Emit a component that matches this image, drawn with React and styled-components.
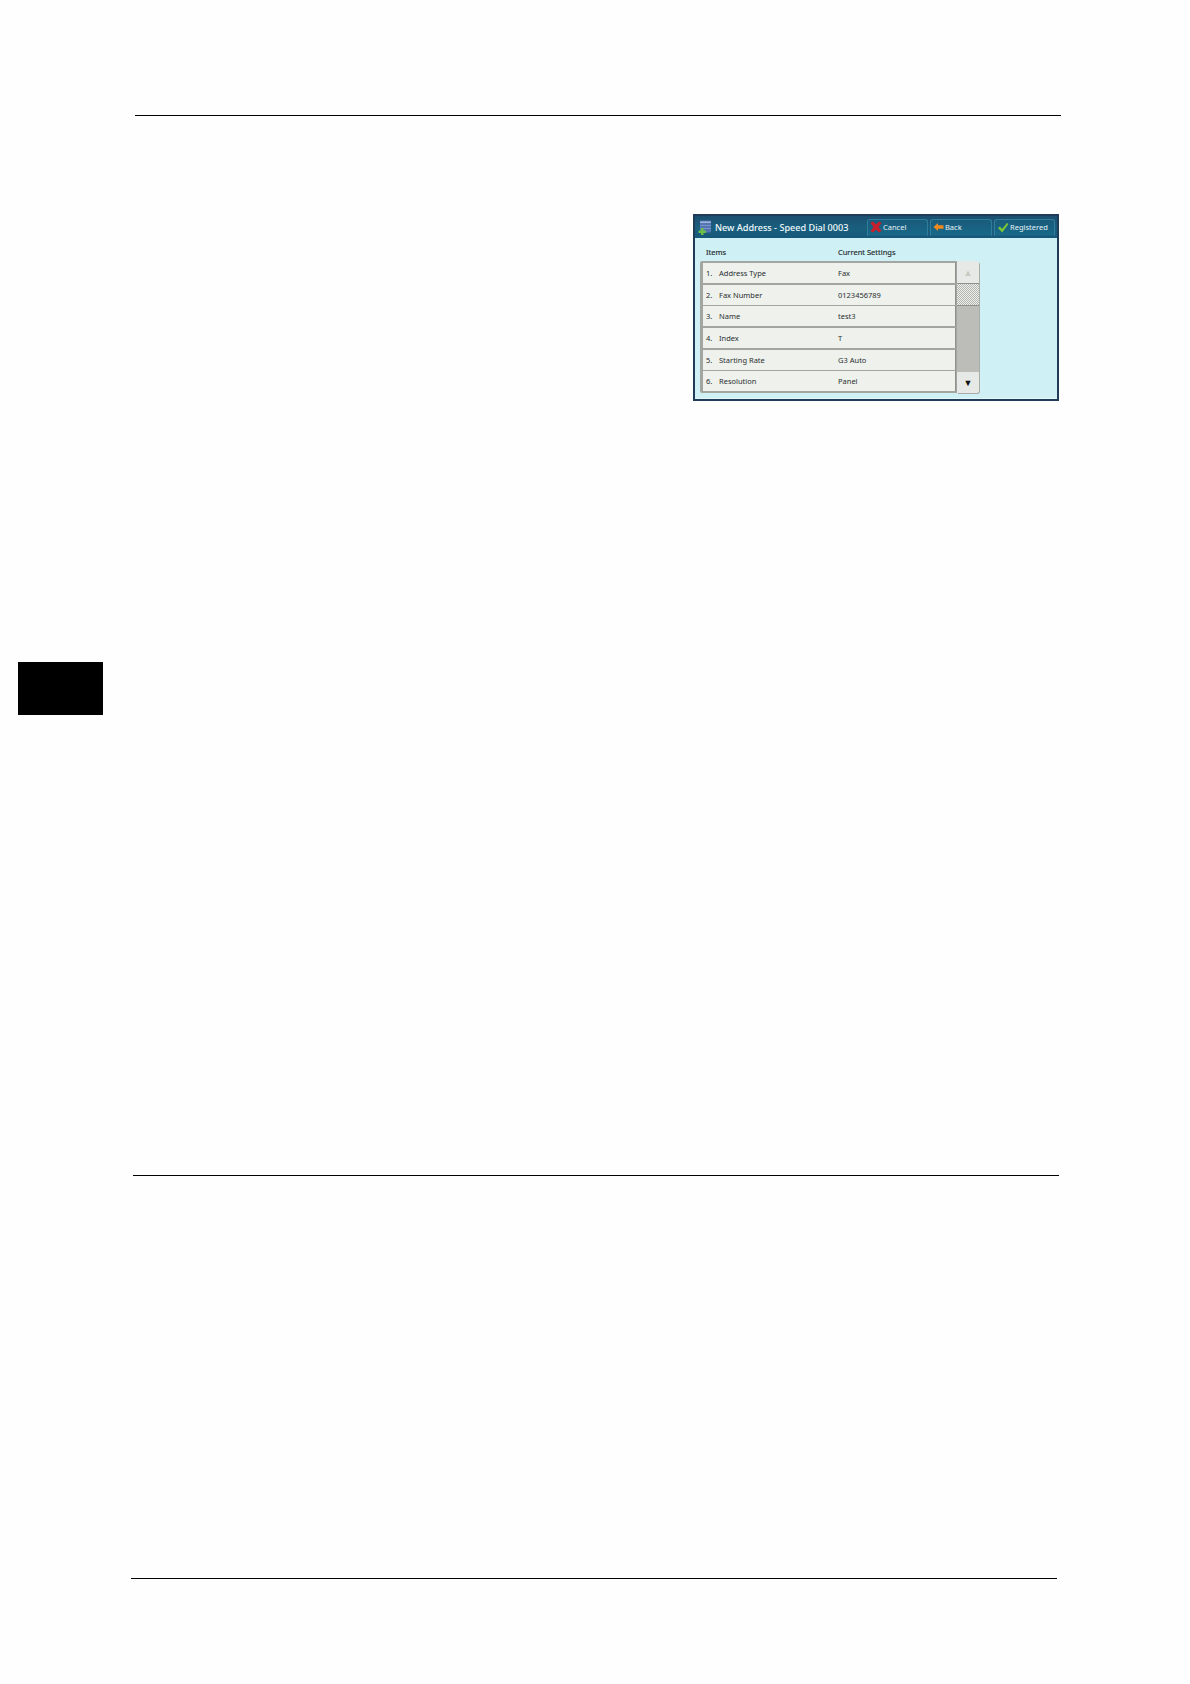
import React from "react";
import styled, { createGlobalStyle } from "styled-components";

const Global = createGlobalStyle`
  html, body { margin: 0; padding: 0; background: #fefefe; }
  * { box-sizing: border-box; }
`;

const Page = styled.div`
  width: 1190px;
  height: 1684px;
  overflow: hidden;
  display: flex;
  flex-direction: column;
  align-items: flex-start;
  font-family: "Noto Sans", "Liberation Sans", sans-serif;
`;

const Rule = styled.div`
  height: 1px;
  background: #000;
  width: ${(p) => p.$width}px;
  margin-left: ${(p) => p.$left}px;
  margin-top: ${(p) => p.$top}px;
`;

const ChapterTab = styled.div`
  width: 85px;
  height: 53px;
  margin-left: 18px;
  margin-top: 261px;
  background: #000;
`;

const Panel = styled.section`
  width: 366px;
  height: 187px;
  margin-left: 693px;
  margin-top: 98px;
  border: 2px solid #1f3d5a;
  display: flex;
  flex-direction: column;
  background: #cff0f4;
`;

const TitleBar = styled.header`
  height: 22px;
  flex: none;
  display: flex;
  align-items: center;
  padding: 0 2px 0 3px;
  background: linear-gradient(#1c4f70, #1a5f7e 55%, #17587a);
  color: #f2fafc;
`;

const Title = styled.h1`
  margin: 0 0 0 3px;
  width: 152px;
  flex: none;
  font-size: 9.1px;
  font-weight: 500;
  white-space: nowrap;
`;

const Actions = styled.div`
  display: flex;
  gap: 2px;
  align-items: center;
`;

const ActionButton = styled.div`
  height: 17px;
  width: ${(p) => p.$w}px;
  display: flex;
  align-items: center;
  gap: 1px;
  padding-left: 2px;
  font-size: 7.5px;
  color: #e6f3f6;
  border: 1px solid #2f7f9c;
  border-bottom-color: #1a5f7e;
  border-radius: 3px 3px 0 0;
  background: linear-gradient(#1a5a7a, #17698a);
`;

const Body = styled.div`
  flex: 1;
  padding: 0 0 0 5px;
  box-shadow: inset 0 -1px 0 #e4f6f8;
`;

const Columns = styled.div`
  height: 23px;
  display: flex;
  align-items: center;
  padding: 5px 0 0 6px;
  font-size: 7.5px;
  color: #1e2a2e;
`;

const ColumnHead = styled.span`
  width: ${(p) => p.$w}px;
  flex: none;
  -webkit-text-stroke: 0.15px #1e2a2e;
`;

const ListArea = styled.div`
  display: flex;
  align-items: stretch;
  width: 279px;
  height: 132px;
`;

const Rows = styled.div`
  width: 257px;
  flex: none;
  padding: 2px 1px 2px 2.5px;
  display: flex;
  flex-direction: column;
  gap: 1.7px;
  background: #a3a6a0;
  border-radius: 2px 0 0 2px;
`;

const Row = styled.div`
  height: 20px;
  flex: none;
  display: grid;
  grid-template-columns: 13px 119px 1fr;
  align-items: center;
  padding-left: 3.5px;
  font-size: 7.5px;
  color: #2a2f30;
  background: #eef1ec;
  border-right: 1px solid #8f918b;
`;

const ScrollBar = styled.div`
  width: 22px;
  flex: none;
  display: flex;
  flex-direction: column;
  border-radius: 0 3px 3px 0;
  overflow: hidden;
  box-shadow: 1px 1px 0 #a9aba5;
`;

const ScrollButton = styled.div`
  height: ${(p) => p.$h}px;
  flex: none;
  display: flex;
  align-items: center;
  justify-content: center;
  background: #e6e9e5;
  font-size: 9px;
  color: ${(p) => (p.$off ? "#c4c7c3" : "#111")};
`;

const ScrollThumb = styled.div`
  height: 23px;
  flex: none;
  border-top: 1px solid #8f918b;
  border-bottom: 1px solid #8f918b;
  background: repeating-conic-gradient(#b4b6b2 0 25%, #eceeea 0 50%) 0 0 / 2px 2px;
`;

const ScrollTrack = styled.div`
  flex: 1;
  background: #bcbdb8;
`;

const AddressIcon = () => (
  <svg width="14" height="15" viewBox="0 0 14 15">
    <rect x="2" y="0.5" width="11" height="12" rx="1" fill="#5474b4" />
    <rect x="2" y="1.5" width="11" height="1.4" fill="#a9bde0" />
    <rect x="2" y="5" width="11" height="0.8" fill="#7f9bcd" />
    <rect x="2" y="8" width="11" height="0.8" fill="#7f9bcd" />
    <path d="M3 8h2.5v2.5H8V13H5.500v2H3v-2H0.500v-2.500H3z" fill="#6cc04a" />
  </svg>
);

const CancelIcon = () => (
  <svg width="12" height="12" viewBox="0 0 12 12">
    <path d="M0.500 2L3 0.500l3 3 3-3L11.500 2 8.500 6l3 4L9 11.500l-3-3-3 3L0.500 10l3-4z" fill="#c8202a" />
  </svg>
);

const BackIcon = () => (
  <svg width="11" height="10" viewBox="0 0 11 10">
    <path d="M0.5 5L5 1v2.2h5.5v3.6H5V9z" fill="#f08a1e" />
  </svg>
);

const CheckIcon = () => (
  <svg width="12" height="11" viewBox="0 0 12 11">
    <path d="M1 6l2-1.500L5 7l5-6 1.500 1L5.200 10.500z" fill="#7cc832" />
  </svg>
);

const items = [
  ["1.", "Address Type", "Fax"],
  ["2.", "Fax Number", "0123456789"],
  ["3.", "Name", "test3"],
  ["4.", "Index", "T"],
  ["5.", "Starting Rate", "G3 Auto"],
  ["6.", "Resolution", "Panel"],
];

export default function App() {
  return (
    <Page>
      <Global />
      <Rule $left={135} $width={926} $top={115} />
      <Panel>
        <TitleBar>
          <AddressIcon />
          <Title>New Address - Speed Dial 0003</Title>
          <Actions>
            <ActionButton $w={61}>
              <CancelIcon />
              Cancel
            </ActionButton>
            <ActionButton $w={62}>
              <BackIcon />
              Back
            </ActionButton>
            <ActionButton $w={61}>
              <CheckIcon />
              Registered
            </ActionButton>
          </Actions>
        </TitleBar>
        <Body>
          <Columns>
            <ColumnHead $w={132}>Items</ColumnHead>
            <ColumnHead $w={100}>Current Settings</ColumnHead>
          </Columns>
          <ListArea>
            <Rows>
              {items.map(([n, label, value]) => (
                <Row key={n}>
                  <span>{n}</span>
                  <span>{label}</span>
                  <span>{value}</span>
                </Row>
              ))}
            </Rows>
            <ScrollBar>
              <ScrollButton $h={22} $off>▲</ScrollButton>
              <ScrollThumb />
              <ScrollTrack />
              <ScrollButton $h={21}>▼</ScrollButton>
            </ScrollBar>
          </ListArea>
        </Body>
      </Panel>
      <ChapterTab />
      <Rule $left={133} $width={926} $top={460} />
      <Rule $left={131} $width={926} $top={402} />
    </Page>
  );
}
